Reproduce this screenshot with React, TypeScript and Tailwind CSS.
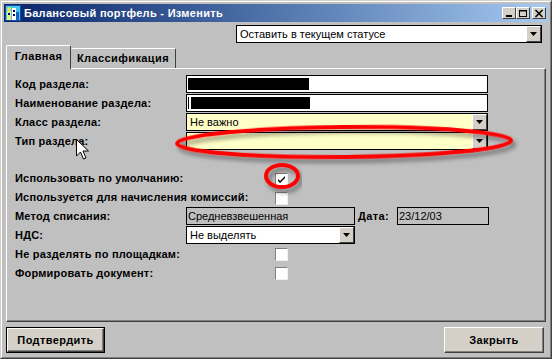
import React from 'react';

function DropArrow({ className = '' }: { className?: string }) {
  return (
    <div className={`w-[15px] h-full shrink-0 bg-[#d4d0c8] border border-t-white border-l-white border-r-[#404040] border-b-[#404040] flex items-center justify-center ${className}`}>
      <svg width="7" height="4" viewBox="0 0 7 4">
        <path d="M0 0h7L3.5 4z" fill="#000" />
      </svg>
    </div>
  );
}

function CheckBox({ checked = false }: { checked?: boolean }) {
  return (
    <div className="w-[13px] h-[13px] bg-white border border-t-[#808080] border-l-[#808080] border-r-[#f0f0f0] border-b-[#f0f0f0] flex items-center justify-center">
      {checked && (
        <svg width="9" height="9" viewBox="0 0 9 9">
          <path d="M1 4l2 2 5-5v2L3 8 1 6z" fill="#000" />
        </svg>
      )}
    </div>
  );
}

function Row({ label, children, className = '' }: { label: string; children?: React.ReactNode; className?: string }) {
  return (
    <div className={`flex h-[19px] items-start ${className}`}>
      <div className="w-[171px] h-[18px] flex items-center font-bold text-[11px] tracking-[0.2px] text-black shrink-0 whitespace-nowrap">{label}</div>
      {children}
    </div>
  );
}

function CaptionBtn({ kind }: { kind: 'min' | 'max' | 'close' }) {
  return (
    <div className="w-[14px] h-[12px] bg-[#d4d0c8] border border-t-white border-l-white border-r-[#404040] border-b-[#404040] flex items-center justify-center">
      <svg width="10" height="9" viewBox="0 0 10 9">
        {kind === 'min' && <rect x="2" y="6" width="6" height="2" fill="#000" />}
        {kind === 'max' && (
          <g fill="none" stroke="#000">
            <rect x="1.5" y="1.5" width="7" height="6" />
            <line x1="1" y1="2" x2="9" y2="2" />
          </g>
        )}
        {kind === 'close' && (
          <g stroke="#000" strokeWidth="1.6">
            <line x1="1.5" y1="1" x2="8.5" y2="8" />
            <line x1="8.5" y1="1" x2="1.5" y2="8" />
          </g>
        )}
      </svg>
    </div>
  );
}

export default function App() {
  return (
    <div className="relative w-[552px] h-[359px] overflow-hidden bg-[#c0c0c0] font-['Liberation_Sans',Arial,sans-serif] text-black border border-t-[#d4d0c8] border-l-[#d4d0c8] border-r-[#404040] border-b-[#404040]">
      <div className="w-full h-full border border-t-white border-l-white border-r-[#808080] border-b-[#808080] p-[2px] flex flex-col">
        {/* title bar */}
        <div className="h-[18px] flex items-center bg-gradient-to-r from-[#0a246a] to-[#a6caf0] pl-[1px] pr-[2px]">
          <svg width="16" height="16" viewBox="0 0 16 16" className="shrink-0">
            <rect x="0" y="0" width="16" height="16" fill="#1848a8" />
            <rect x="1" y="1" width="14" height="14" fill="#40c8f0" />
            <rect x="2" y="6" width="4" height="9" fill="#f0f070" />
            <rect x="7" y="3" width="4" height="12" fill="#ffffff" />
            <rect x="11" y="7" width="3" height="8" fill="#2060c0" />
            <rect x="3" y="8" width="2" height="2" fill="#000080" />
            <rect x="8" y="5" width="2" height="2" fill="#000080" />
            <rect x="8" y="9" width="2" height="2" fill="#000080" />
            <circle cx="4" cy="4" r="2" fill="#ffe040" />
          </svg>
          <div className="ml-[3px] text-white font-bold text-[11px] tracking-[0.3px] leading-none whitespace-nowrap">Балансовый портфель - Изменить</div>
          <div className="ml-auto flex items-center">
            <CaptionBtn kind="min" />
            <CaptionBtn kind="max" />
            <div className="w-[2px]" />
            <CaptionBtn kind="close" />
          </div>
        </div>

        <div className="flex-1 px-[2px] flex flex-col">
          {/* status select */}
          <div className="mt-[3px] h-[18px] flex justify-end pr-[4px]">
            <div className="w-[306px] h-[18px] bg-white border border-black flex">
              <div className="flex-1 pl-[3px] text-[11px] flex items-center">Оставить в текущем статусе</div>
              <DropArrow />
            </div>
          </div>

          {/* tabs */}
          <div className="mt-[2px] h-[23px] flex items-end relative z-10">
            <div className="w-[65px] h-[24px] -mb-[1px] bg-[#c0c0c0] border-t border-l border-t-white border-l-white border-r border-r-[#404040] rounded-t-[2px] flex items-center justify-center font-bold text-[11px] tracking-[0.4px] pb-[2px]">
              Главная
            </div>
            <div className="w-[105px] h-[20px] bg-[#c0c0c0] border-t border-t-white border-r border-r-[#404040] rounded-t-[2px] flex items-center justify-center font-bold text-[11px] tracking-[0.4px]">
              Классификация
            </div>
          </div>

          {/* panel */}
          <div className="h-[254px] border border-t-white border-l-white border-r-[#404040] border-b-[#404040] shadow-[inset_-1px_-1px_0_#808080] pt-[6px] pl-[8px]">
            <Row label="Код раздела:">
              <div className="w-[302px] h-[18px] bg-white border border-black px-[1px] pt-[2px]">
                <div className="w-[121px] h-[12px] bg-black" />
              </div>
            </Row>
            <Row label="Наименование раздела:">
              <div className="w-[302px] h-[18px] bg-white border border-black flex pt-[2px] pl-[1px]">
                <div className="w-[1px] h-[12px] bg-black" />
                <div className="ml-[2px] w-[119px] h-[12px] bg-black" />
              </div>
            </Row>
            <Row label="Класс раздела:">
              <div className="w-[302px] h-[18px] bg-[#ffffc8] border border-black flex">
                <div className="flex-1 pl-[3px] text-[11px] flex items-center">Не важно</div>
                <DropArrow />
              </div>
            </Row>
            <Row label="Тип раздела:">
              <div className="w-[302px] h-[18px] bg-[#ffffc8] border border-black flex">
                <div className="flex-1" />
                <DropArrow />
              </div>
            </Row>

            <Row label="Использовать по умолчанию:" className="mt-[18px]">
              <div className="ml-[89px] h-[19px] flex items-center pt-[2px]">
                <CheckBox checked />
              </div>
            </Row>
            <Row label="Используется для начисления комиссий:">
              <div className="ml-[89px] h-[19px] flex items-center pt-[2px]">
                <CheckBox />
              </div>
            </Row>
            <Row label="Метод списания:">
              <div className="w-[169px] h-[18px] border border-black pl-[1px] text-[11px] flex items-center">Средневзвешенная</div>
              <div className="ml-[3px] w-[39px] h-[18px] flex items-center font-bold text-[11px] tracking-[0.4px]">Дата:</div>
              <div className="w-[92px] h-[18px] border border-black pl-[1px] text-[11px] flex items-center">23/12/03</div>
            </Row>
            <Row label="НДС:">
              <div className="w-[169px] h-[18px] bg-white border border-black flex">
                <div className="flex-1 pl-[3px] text-[11px] flex items-center">Не выделять</div>
                <DropArrow />
              </div>
            </Row>
            <Row label="Не разделять по площадкам:">
              <div className="ml-[89px] h-[19px] flex items-center">
                <CheckBox />
              </div>
            </Row>
            <Row label="Формировать документ:">
              <div className="ml-[89px] h-[19px] flex items-center">
                <CheckBox />
              </div>
            </Row>
          </div>

          {/* buttons */}
          <div className="mt-[5px] h-[26px] flex justify-between pr-[2px]">
            <div className="w-[99px] h-[26px] border border-black">
              <div className="w-full h-full bg-[#d4d0c8] border border-t-white border-l-white border-r-[#404040] border-b-[#404040] shadow-[inset_-1px_-1px_0_#808080] flex items-center justify-center font-bold text-[11px] tracking-[0.4px]">
                Подтвердить
              </div>
            </div>
            <div className="w-[100px] h-[26px] bg-[#d4d0c8] border border-t-white border-l-white border-r-[#404040] border-b-[#404040] shadow-[inset_-1px_-1px_0_#808080] flex items-center justify-center font-bold text-[11px] tracking-[0.4px]">
              Закрыть
            </div>
          </div>
        </div>
      </div>

      {/* annotations drawn over the screenshot */}
      <svg className="absolute left-0 top-0 pointer-events-none z-20" width="552" height="359" viewBox="0 0 552 359">
        <defs>
          <filter id="shadow" x="-10%" y="-50%" width="120%" height="200%">
            <feDropShadow dx="3" dy="4" stdDeviation="2" floodColor="#000" floodOpacity="0.4" />
          </filter>
        </defs>
        <ellipse cx="343" cy="141" rx="167" ry="15" fill="none" stroke="#ff0000" strokeWidth="4" filter="url(#shadow)" transform="rotate(-0.5 343 141)" />
        <ellipse cx="281" cy="175" rx="16" ry="11" fill="none" stroke="#ff0000" strokeWidth="4" filter="url(#shadow)" />
        <g transform="translate(75 138)">
          <path d="M0.5 0.5V17L4.5 13L7.5 20L10 19L7 12H12.5Z" fill="#fff" stroke="#000" strokeWidth="1" strokeLinejoin="miter" />
        </g>
      </svg>
    </div>
  );
}
